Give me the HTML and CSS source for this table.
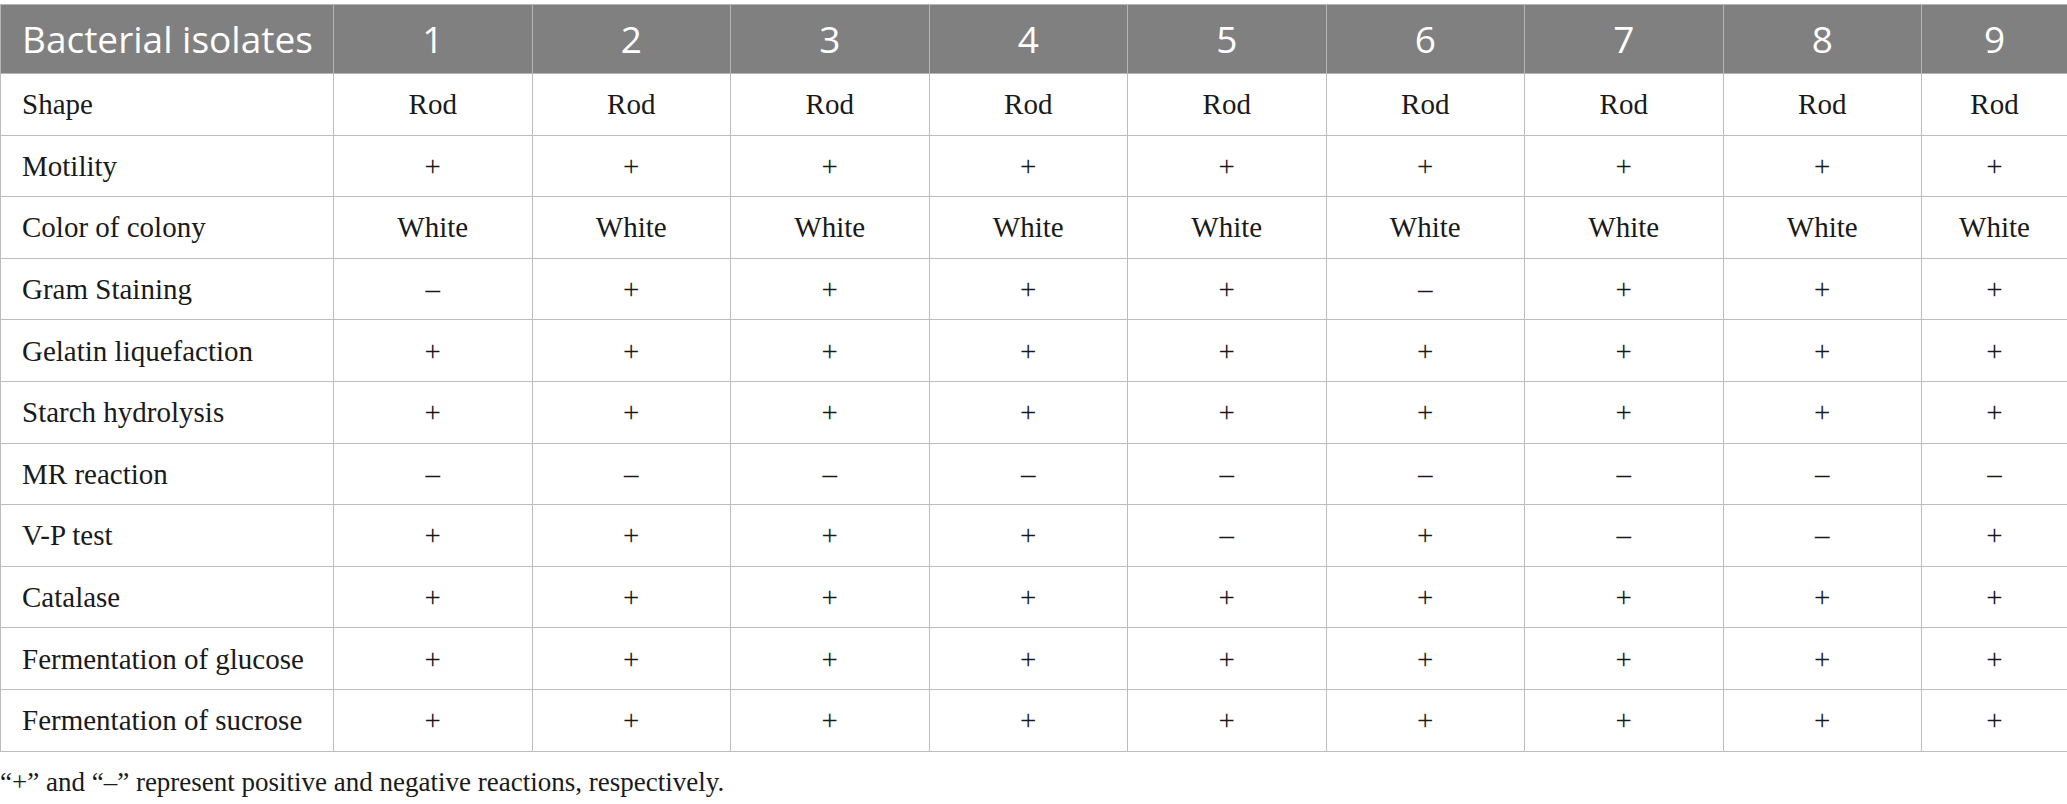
FILE: index.html
```html
<!DOCTYPE html>
<html>
<head>
<meta charset="utf-8">
<link rel="stylesheet" href="styles.css">
</head>
<body>
<div class="page">
<table class="data">
<colgroup>
<col class="c0"><col class="cn"><col class="cn"><col class="cn"><col class="cn"><col class="cn"><col class="cn"><col class="cn"><col class="cn"><col class="c9">
</colgroup>
<thead>
<tr><th class="lab">Bacterial isolates</th><th>1</th><th>2</th><th>3</th><th>4</th><th>5</th><th>6</th><th>7</th><th>8</th><th>9</th></tr>
</thead>
<tbody>
<tr><td class="lab">Shape</td><td>Rod</td><td>Rod</td><td>Rod</td><td>Rod</td><td>Rod</td><td>Rod</td><td>Rod</td><td>Rod</td><td>Rod</td></tr>
<tr><td class="lab">Motility</td><td>+</td><td>+</td><td>+</td><td>+</td><td>+</td><td>+</td><td>+</td><td>+</td><td>+</td></tr>
<tr><td class="lab">Color of colony</td><td>White</td><td>White</td><td>White</td><td>White</td><td>White</td><td>White</td><td>White</td><td>White</td><td>White</td></tr>
<tr><td class="lab">Gram Staining</td><td>–</td><td>+</td><td>+</td><td>+</td><td>+</td><td>–</td><td>+</td><td>+</td><td>+</td></tr>
<tr><td class="lab">Gelatin liquefaction</td><td>+</td><td>+</td><td>+</td><td>+</td><td>+</td><td>+</td><td>+</td><td>+</td><td>+</td></tr>
<tr><td class="lab">Starch hydrolysis</td><td>+</td><td>+</td><td>+</td><td>+</td><td>+</td><td>+</td><td>+</td><td>+</td><td>+</td></tr>
<tr><td class="lab">MR reaction</td><td>–</td><td>–</td><td>–</td><td>–</td><td>–</td><td>–</td><td>–</td><td>–</td><td>–</td></tr>
<tr><td class="lab">V-P test</td><td>+</td><td>+</td><td>+</td><td>+</td><td>–</td><td>+</td><td>–</td><td>–</td><td>+</td></tr>
<tr><td class="lab">Catalase</td><td>+</td><td>+</td><td>+</td><td>+</td><td>+</td><td>+</td><td>+</td><td>+</td><td>+</td></tr>
<tr><td class="lab">Fermentation of glucose</td><td>+</td><td>+</td><td>+</td><td>+</td><td>+</td><td>+</td><td>+</td><td>+</td><td>+</td></tr>
<tr><td class="lab">Fermentation of sucrose</td><td>+</td><td>+</td><td>+</td><td>+</td><td>+</td><td>+</td><td>+</td><td>+</td><td>+</td></tr>
</tbody>
</table>
<p class="note">“+” and “–” represent positive and negative reactions, respectively.</p>
</div>
</body>
</html>
```
FILE: styles.css
```css
html, body {
  margin: 0;
  padding: 0;
  background: #ffffff;
}
.page {
  padding-top: 4px;
}
.data {
  border-collapse: collapse;
  table-layout: fixed;
  width: 2067px;
}
.c0 { width: 333px; }
.cn { width: 198.5px; }
.c9 { width: 146px; }
.data th {
  background: #7f807f;
  color: #ffffff;
  font-family: "Open Sans", sans-serif;
  font-weight: 400;
  font-size: 37px;
  line-height: 44px;
  height: 68px;
  padding: 0;
  border: 1px solid #b5b5b5;
  text-align: center;
  vertical-align: middle;
}
.data th.lab {
  text-align: left;
  padding-left: 21px;
}
.data td {
  font-family: "Liberation Serif", serif;
  font-size: 29px;
  line-height: 34px;
  color: #1a1a1a;
  height: 60.6px;
  padding: 0;
  border: 1px solid #bdbdbd;
  text-align: center;
  vertical-align: middle;
}
.data td.lab {
  text-align: left;
  padding-left: 21px;
}
.note {
  margin: 14px 0 0 0;
  font-family: "Liberation Serif", serif;
  font-size: 27px;
  line-height: 32px;
  color: #1a1a1a;
}
```
